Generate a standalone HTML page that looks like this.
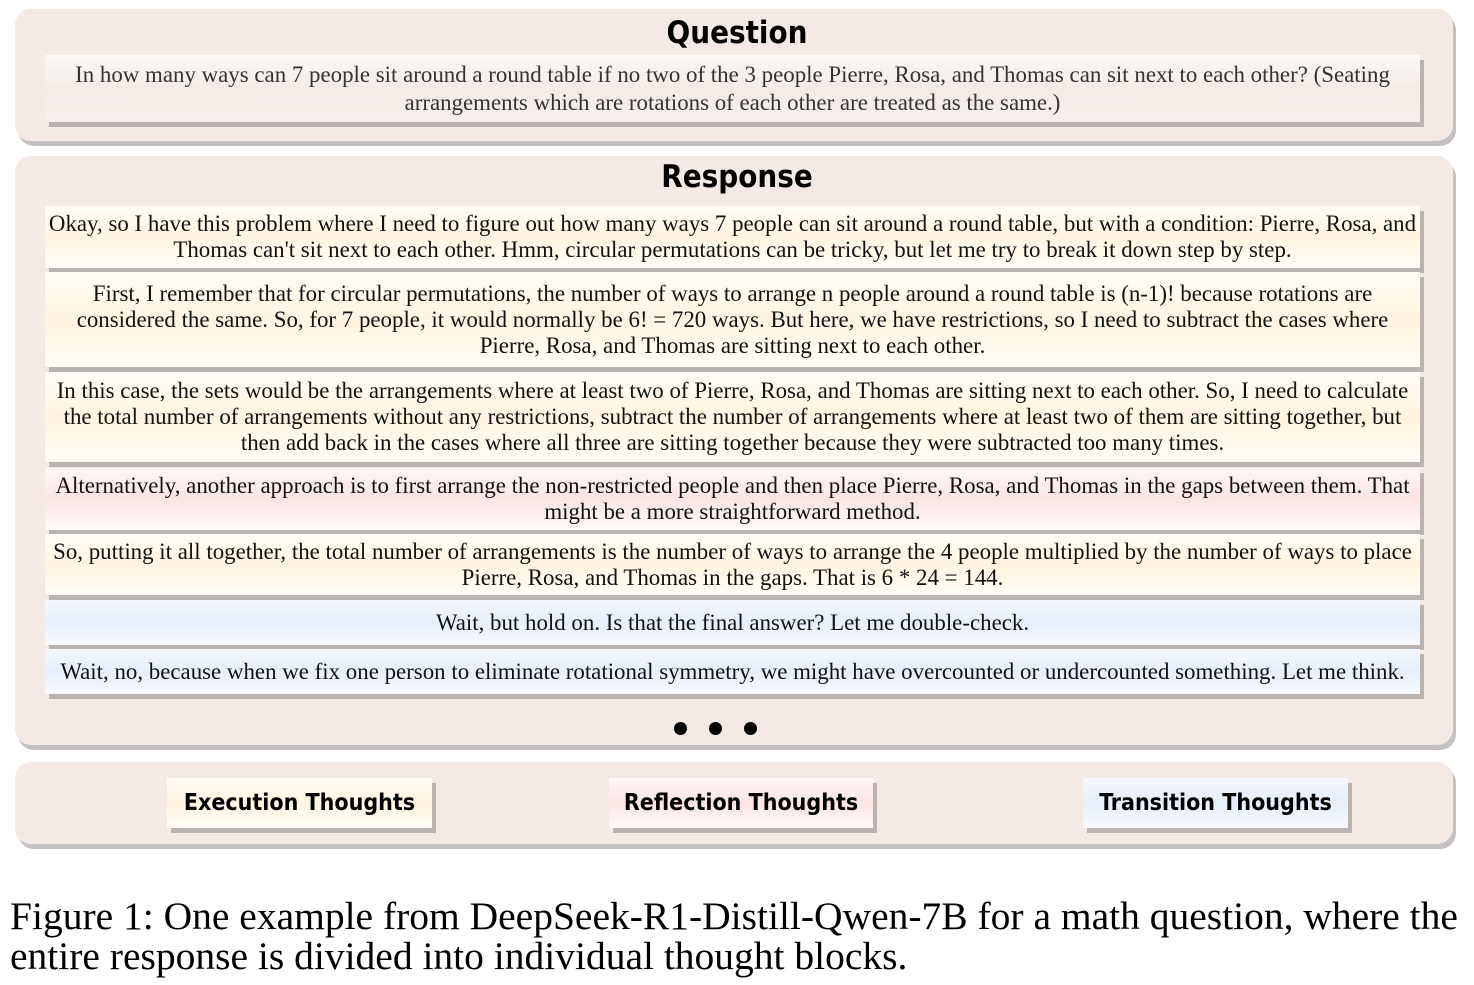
<!DOCTYPE html>
<html><head><meta charset="utf-8"><style>
body{margin:0;width:1474px;height:985px;background:#fff;position:relative;overflow:hidden;font-family:"Liberation Serif",serif;}
.panel{position:absolute;left:15px;width:1438px;background:#f3eae5;border-radius:16px;box-shadow:3px 5px 0 #c2c0c0;}
.title{position:absolute;left:0;right:0;text-align:center;font-family:"DejaVu Sans Condensed","DejaVu Sans",sans-serif;font-weight:bold;font-size:31px;color:#000;}
.blk{position:absolute;left:45px;width:1375px;box-shadow:4px 5px 0 #bab3b0;text-align:center;font-size:22.9px;line-height:26px;color:#111;display:flex;align-items:center;justify-content:center;box-sizing:border-box;padding:0 0;white-space:nowrap;}
.ex{background:linear-gradient(#fffdf8,#fff4e0 50%,#fffdf8);}
.re{background:linear-gradient(#fff8f8,#fbe3e3 50%,#fffafa);}
.tr{background:linear-gradient(#f4f7fd,#e6eef9 50%,#f8fafe);}
.q{background:linear-gradient(#fbf8f6,#f3ebe6 50%,#f6efeb);}
.btn{position:absolute;top:778px;height:50px;box-shadow:4px 5px 0 #bab3b0;font-family:"DejaVu Sans Condensed","DejaVu Sans",sans-serif;font-weight:bold;font-size:23px;display:flex;align-items:center;justify-content:center;}
.cap{position:absolute;left:10px;top:896px;font-size:39.5px;line-height:40px;color:#000;white-space:nowrap;}
.dot{position:absolute;top:722px;width:13px;height:13px;border-radius:50%;background:#000;}
</style></head><body>
<div class="panel" style="top:9px;height:132px;"></div>
<div class="title" style="top:15px;">Question</div>
<div class="blk q" style="top:55px;height:67px;color:#333;line-height:28px;">In how many ways can 7 people sit around a round table if no two of the 3 people Pierre, Rosa, and Thomas can sit next to each other? (Seating<br>arrangements which are rotations of each other are treated as the same.)</div>

<div class="panel" style="top:156px;height:589px;"></div>
<div class="title" style="top:159px;">Response</div>
<div class="blk ex" style="top:206px;height:62px;">Okay, so I have this problem where I need to figure out how many ways 7 people can sit around a round table, but with a condition: Pierre, Rosa, and<br>Thomas can't sit next to each other. Hmm, circular permutations can be tricky, but let me try to break it down step by step.</div>
<div class="blk ex" style="top:272px;height:95px;">First, I remember that for circular permutations, the number of ways to arrange n people around a round table is (n-1)! because rotations are<br>considered the same. So, for 7 people, it would normally be 6! = 720 ways. But here, we have restrictions, so I need to subtract the cases where<br>Pierre, Rosa, and Thomas are sitting next to each other.</div>
<div class="blk ex" style="top:372px;height:90px;">In this case, the sets would be the arrangements where at least two of Pierre, Rosa, and Thomas are sitting next to each other. So, I need to calculate<br>the total number of arrangements without any restrictions, subtract the number of arrangements where at least two of them are sitting together, but<br>then add back in the cases where all three are sitting together because they were subtracted too many times.</div>
<div class="blk re" style="top:468px;height:62px;">Alternatively, another approach is to first arrange the non-restricted people and then place Pierre, Rosa, and Thomas in the gaps between them. That<br>might be a more straightforward method.</div>
<div class="blk ex" style="top:534px;height:61px;">So, putting it all together, the total number of arrangements is the number of ways to arrange the 4 people multiplied by the number of ways to place<br>Pierre, Rosa, and Thomas in the gaps. That is 6 * 24 = 144.</div>
<div class="blk tr" style="top:600px;height:45px;">Wait, but hold on. Is that the final answer? Let me double-check.</div>
<div class="blk tr" style="top:649px;height:45px;">Wait, no, because when we fix one person to eliminate rotational symmetry, we might have overcounted or undercounted something. Let me think.</div>
<div class="dot" style="left:674px;"></div><div class="dot" style="left:709px;"></div><div class="dot" style="left:744px;"></div>

<div class="panel" style="top:762px;height:82px;"></div>
<div class="btn ex" style="left:167px;width:265px;">Execution Thoughts</div>
<div class="btn re" style="left:609px;width:264px;">Reflection Thoughts</div>
<div class="btn tr" style="left:1083px;width:265px;">Transition Thoughts</div>

<div class="cap">Figure 1: One example from DeepSeek-R1-Distill-Qwen-7B for a math question, where the<br>entire response is divided into individual thought blocks.</div>
</body></html>
